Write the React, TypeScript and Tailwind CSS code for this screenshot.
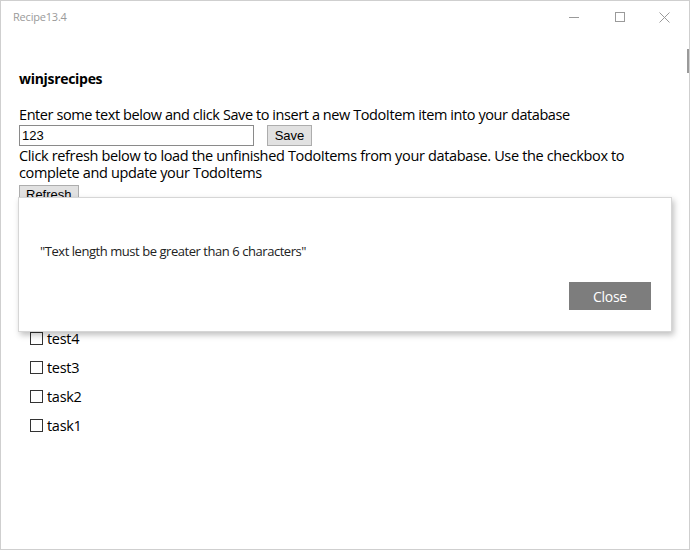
import { useState } from 'react';

type Todo = {
  text: string;
  complete: boolean;
};

const sans = "font-['Open_Sans','Noto_Sans',sans-serif]";

export default function App() {
  const [text, setText] = useState<string>('123');
  const [todos, setTodos] = useState<Todo[]>([
    { text: 'test4', complete: false },
    { text: 'test3', complete: false },
    { text: 'task2', complete: false },
    { text: 'task1', complete: false },
  ]);
  const [showDialog, setShowDialog] = useState<boolean>(true);

  const toggle = (index: number) => {
    setTodos(todos.map((t, i) => (i === index ? { ...t, complete: !t.complete } : t)));
  };

  return (
    <div className={`relative w-[690px] h-[550px] bg-white border border-[#cfcfcf] overflow-hidden text-black ${sans}`}>
      {/* title bar */}
      <div className="flex items-center h-[32px] pl-[12px]">
        <span className="text-[11px] text-[#9a9a9a] tracking-[-0.2px]">Recipe13.4</span>
        <div className="ml-auto flex items-center h-full">
          <div className="w-[46px] h-full flex items-center justify-center">
            <div className="w-[10px] h-px bg-[#9a9a9a]" />
          </div>
          <div className="w-[46px] h-full flex items-center justify-center">
            <div className="w-[10px] h-[10px] border border-[#9a9a9a]" />
          </div>
          <div className="w-[46px] h-full flex items-center justify-center pr-[3px]">
            <svg width="11" height="11" viewBox="0 0 11 11" stroke="#9a9a9a" strokeWidth="1">
              <path d="M0.5 0.5 L10.5 10.5 M10.5 0.5 L0.5 10.5" />
            </svg>
          </div>
        </div>
      </div>
      <div className="absolute right-0 top-[48px] w-[2px] h-[24px] bg-[#9a9a9a]" />

      {/* page */}
      <div className="px-[18px] pt-[36px]">
        <h1 className="text-[14px] font-bold leading-[20px] tracking-[-0.3px]">winjsrecipes</h1>
        <p className="mt-[17px] text-[14.5px] leading-[18px] tracking-[-0.42px]">
          Enter some text below and click Save to insert a new TodoItem item into your database
        </p>
        <div className="flex items-center mt-[1px]">
          <input
            type="text"
            value={text}
            onChange={(e) => setText(e.target.value)}
            className="w-[235px] h-[21px] border border-[#8a8a8a] px-[2px] text-[13px] font-['Liberation_Sans',Arial,sans-serif] outline-none"
          />
          <button
            onClick={() => text.trim().length <= 6 && setShowDialog(true)}
            className="ml-[13px] w-[45px] h-[21px] bg-[#e1e1e1] border border-[#adadad] text-[13px] font-['Liberation_Sans',Arial,sans-serif]"
          >
            Save
          </button>
        </div>
        <p className="mt-[1px] text-[14.5px] leading-[17px] tracking-[-0.35px]">
          Click refresh below to load the unfinished TodoItems from your database. Use the checkbox to complete and update your TodoItems
        </p>
        <button className="h-[21px] px-[6px] bg-[#e1e1e1] border border-[#adadad] text-[13px] font-['Liberation_Sans',Arial,sans-serif] leading-[18px]">
          Refresh
        </button>

        <ul className="mt-[124px] pl-[11px] flex flex-col gap-[11px]">
          {todos.map((item, index) => (
            <li key={index} className="flex items-center h-[18px]">
              <button
                onClick={() => toggle(index)}
                className="w-[13px] h-[13px] border border-[#333] bg-white flex items-center justify-center text-[10px] leading-none"
              >
                {item.complete ? '✓' : ''}
              </button>
              <span className="ml-[4px] text-[14.5px] tracking-[-0.3px]">{item.text}</span>
            </li>
          ))}
        </ul>
      </div>

      {/* message dialog */}
      {showDialog && (
        <div className="absolute left-[17px] top-[196px] w-[654px] h-[135px] bg-white border border-[#d6d6d6] shadow-[2px_3px_6px_rgba(0,0,0,0.25)]">
          <p className="absolute left-[21px] top-[44px] text-[13px] tracking-[-0.45px] text-[#222]">
            "Text length must be greater than 6 characters"
          </p>
          <button
            onClick={() => setShowDialog(false)}
            className="absolute left-[550px] top-[84px] w-[82px] h-[28px] bg-[#7d7d7d] text-white text-[14px] tracking-[-0.3px]"
          >
            Close
          </button>
        </div>
      )}
    </div>
  );
}
